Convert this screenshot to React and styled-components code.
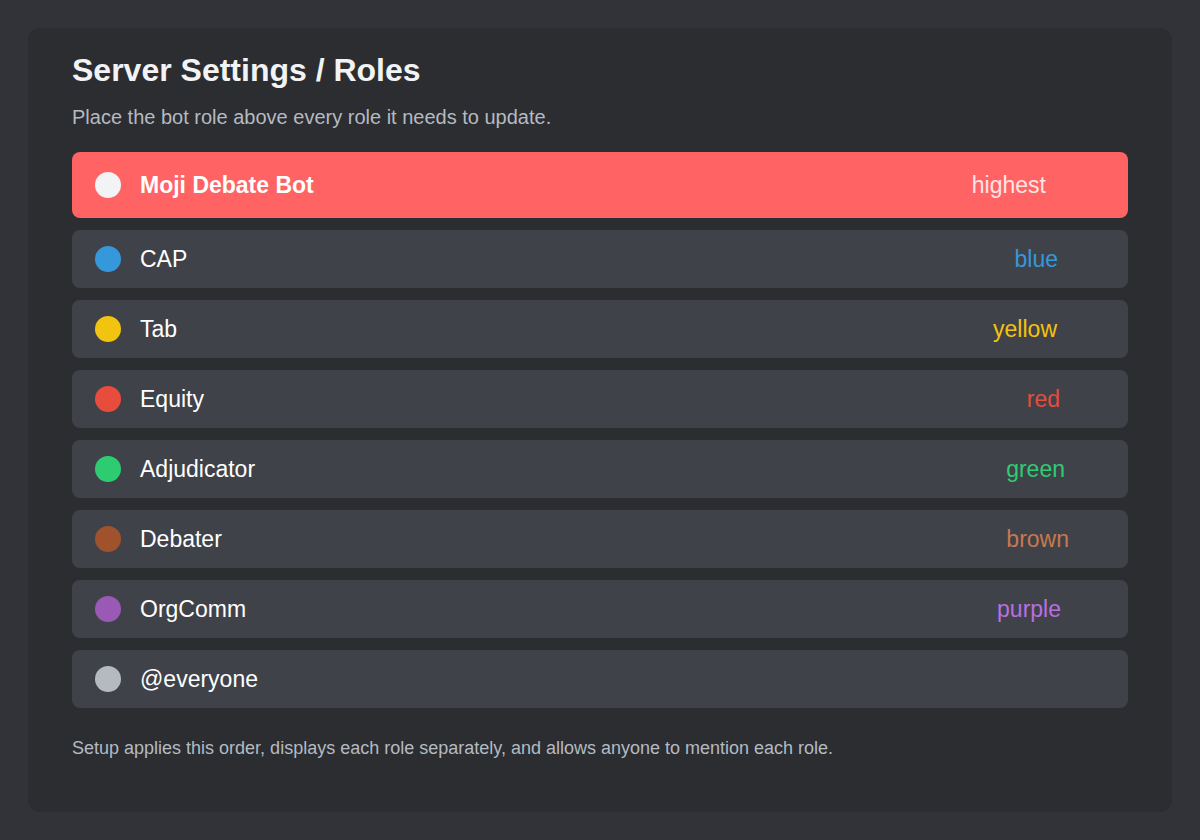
import React from 'react';
import styled, { createGlobalStyle } from 'styled-components';

const GlobalStyle = createGlobalStyle`
  html, body {
    margin: 0;
    padding: 0;
    background: #313338;
    font-family: "Liberation Sans", Arial, sans-serif;
  }
`;

const Page = styled.div`
  width: 1200px;
  height: 840px;
  padding: 28px;
  box-sizing: border-box;
`;

const Panel = styled.section`
  height: 100%;
  box-sizing: border-box;
  background: #2b2d31;
  border-radius: 12px;
  padding: 22px 44px 0;
`;

const Title = styled.h1`
  margin: 0;
  font-size: 32px;
  line-height: 40px;
  font-weight: 700;
  color: #f2f3f5;
`;

const Subtitle = styled.p`
  margin: 15px 0 0;
  font-size: 20px;
  line-height: 24px;
  color: #b5bac1;
`;

const RoleList = styled.div`
  display: flex;
  flex-direction: column;
  gap: 12px;
  margin-top: 23px;
`;

const RoleRow = styled.div`
  display: flex;
  align-items: center;
  height: ${(p) => (p.$bot ? '66px' : '58px')};
  padding-left: 23px;
  border-radius: 8px;
  background: ${(p) => (p.$bot ? '#ff6363' : '#404249')};
`;

const Dot = styled.span`
  width: 26px;
  height: 26px;
  border-radius: 50%;
  flex-shrink: 0;
  background: ${(p) => p.$color};
`;

const RoleName = styled.span`
  margin-left: 19px;
  flex: 1;
  font-size: 23px;
  font-weight: ${(p) => (p.$bot ? 700 : 400)};
  color: #ffffff;
`;

const RoleTag = styled.span`
  font-size: 23px;
  color: ${(p) => p.$color};
  margin-right: ${(p) => p.$offset}px;
`;

const Footer = styled.p`
  margin: 29px 0 0;
  font-size: 18px;
  line-height: 22px;
  color: #b5bac1;
`;

const roles = [
  { name: 'Moji Debate Bot', dot: '#f2f3f5', tag: 'highest', tagColor: '#ffe5e5', offset: 82, bot: true },
  { name: 'CAP', dot: '#3498db', tag: 'blue', tagColor: '#3498db', offset: 70 },
  { name: 'Tab', dot: '#f1c40f', tag: 'yellow', tagColor: '#f1c40f', offset: 71 },
  { name: 'Equity', dot: '#e74c3c', tag: 'red', tagColor: '#e74c3c', offset: 68 },
  { name: 'Adjudicator', dot: '#2ecc71', tag: 'green', tagColor: '#2ecc71', offset: 63 },
  { name: 'Debater', dot: '#a0522d', tag: 'brown', tagColor: '#c8784f', offset: 59 },
  { name: 'OrgComm', dot: '#9b59b6', tag: 'purple', tagColor: '#b86fe0', offset: 67 },
  { name: '@everyone', dot: '#b5bac1' },
];

export default function App() {
  return (
    <>
      <GlobalStyle />
      <Page>
        <Panel>
          <Title>Server Settings / Roles</Title>
          <Subtitle>Place the bot role above every role it needs to update.</Subtitle>
          <RoleList>
            {roles.map((r) => (
              <RoleRow key={r.name} $bot={r.bot}>
                <Dot $color={r.dot} />
                <RoleName $bot={r.bot}>{r.name}</RoleName>
                {r.tag && (
                  <RoleTag $color={r.tagColor} $offset={r.offset}>
                    {r.tag}
                  </RoleTag>
                )}
              </RoleRow>
            ))}
          </RoleList>
          <Footer>
            Setup applies this order, displays each role separately, and allows anyone to mention each role.
          </Footer>
        </Panel>
      </Page>
    </>
  );
}
